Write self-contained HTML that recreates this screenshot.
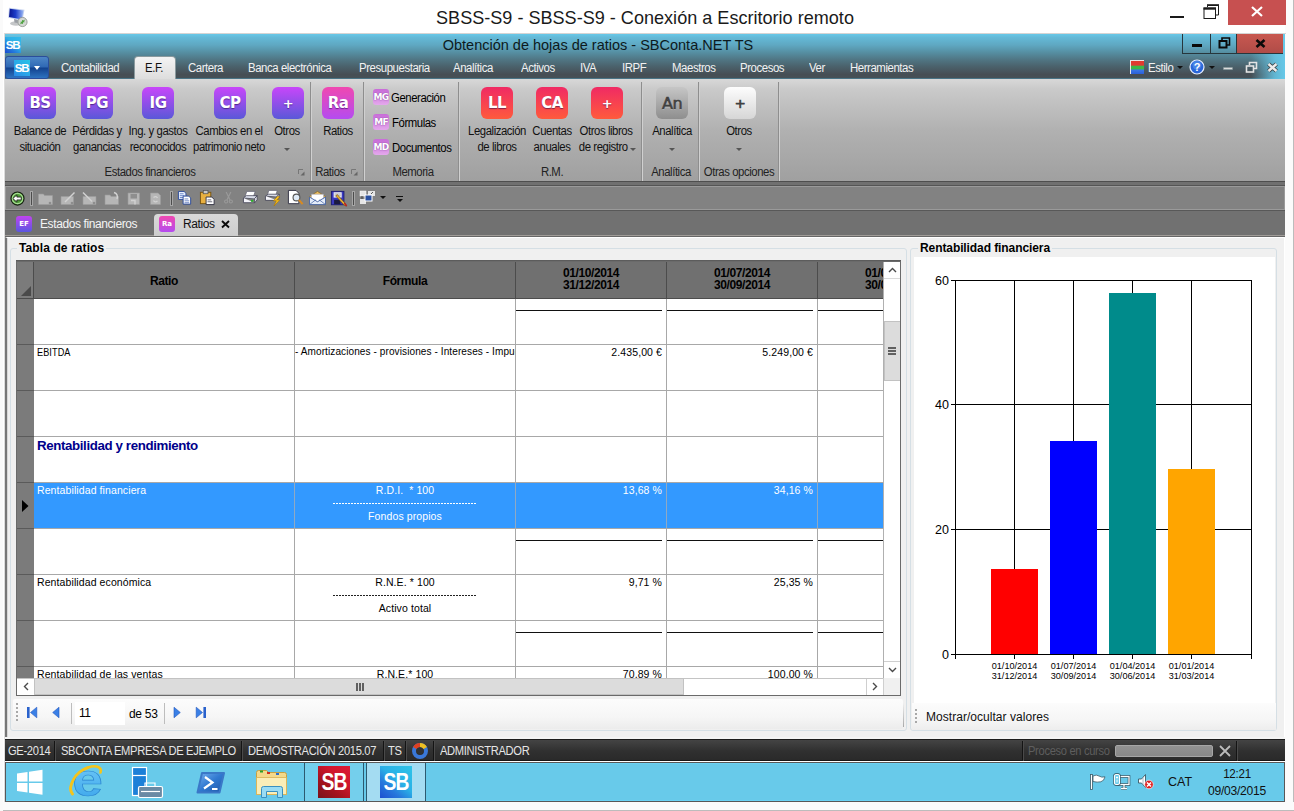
<!DOCTYPE html>
<html lang="es">
<head>
<meta charset="utf-8">
<title>SBSS-S9 - Conexión a Escritorio remoto</title>
<style>
*{box-sizing:border-box;margin:0;padding:0}
html,body{width:1294px;height:811px;overflow:hidden;background:#fff}
body{font-family:"Liberation Sans","DejaVu Sans",sans-serif;font-size:11px;color:#000;position:relative}
.abs{position:absolute}
.t{position:absolute;white-space:nowrap;line-height:1}
.c{text-align:center}
/* outer window */
#outer{position:absolute;left:0;top:0;width:1294px;height:811px;background:#fff}
#frameR{position:absolute;left:1285px;top:0;width:9px;height:811px;background:#fbfbfb;border-right:1px solid #bcbcbc}
#frameB{position:absolute;left:0;top:802px;width:1294px;height:9px;background:#fbfbfb;border-bottom:1px solid #bcbcbc}
#frameL{position:absolute;left:0;top:0;width:3px;height:811px;background:#fafafa}
#otitle{left:0;width:1290px;top:9px;font-size:18.5px;color:#1a1a1a;text-align:center;transform:scaleX(.977)}
#oclose{position:absolute;left:1228px;top:0;width:58px;height:25px;background:#c75050}
/* inner */
#app{position:absolute;left:5px;top:34px;width:1280px;height:768px;background:#f0f0f0;overflow:hidden}
#hdr{position:absolute;left:0;top:0;width:1280px;height:45px;background:linear-gradient(#68c8e8 0px,#64b9d7 3.500px,#5fa8c2 11px,#5690a4 18px,#507684 25.500px,#4a606a 33px,#464e54 40.500px,#465056 43.500px,#4a7486 44.500px)}
#hdrR{position:absolute;right:0;top:0;width:34px;height:45px;background:linear-gradient(90deg,rgba(102,200,232,0),rgba(102,200,232,.85) 70%,#66c8e8)}
#atitle{left:0;width:1186px;top:4px;font-size:14.5px;color:#0d1a20;text-align:center}
.menu{top:27.5px;font-size:12px;color:#f2f2f2;letter-spacing:-.45px;transform:scaleX(.95);transform-origin:0 0}
#eftab{position:absolute;left:129px;top:22px;width:42px;height:24px;background:linear-gradient(#f4f4f4,#dcdcdc);border-radius:4px 4px 0 0;border:1px solid #8a9a9e;border-bottom:0}
/* ribbon */
#ribbon{position:absolute;left:0;top:45px;width:1280px;height:102px;background:linear-gradient(#d8d8d8 0,#cacaca 10px,#c1c1c1 24px,#b9b9b9 38px,#b1b1b1 51px,#acacac 65px,#a8a8a8 78px,#a3a3a3 92px,#a0a0a0 102px)}
.sep{position:absolute;top:3px;width:2px;height:99px;background:linear-gradient(90deg,#8e8e8e 50%,#d0d0d0 50%)}
.ico{position:absolute;top:8px;width:32px;height:32px;border-radius:6px;color:#fff;font-weight:bold;font-size:15px;text-align:center;line-height:33.500px;font-family:"DejaVu Sans","Liberation Sans",sans-serif;letter-spacing:-.5px;text-shadow:0 1px 1px rgba(30,10,70,.55)}
.pur{background:linear-gradient(#c846fa,#5a58d8)}
.pnk{background:linear-gradient(#f048b0,#b44cf0)}
.red{background:linear-gradient(#f02a64,#ff5a3c)}
.gry{background:linear-gradient(#c6c6c6,#8e8e8e);color:#404040;font-weight:normal;text-shadow:0 1px 0 rgba(255,255,255,.5);-webkit-text-stroke:.4px #404040}
.wht{background:linear-gradient(#fdfdfd,#d6d6d6);color:#404040;font-weight:normal;text-shadow:none;-webkit-text-stroke:.4px #404040}
.rl{position:absolute;font-size:12px;line-height:16px;text-align:center;white-space:nowrap;color:#111;letter-spacing:-.45px;transform:translateX(-50%) scaleX(.945)}
.gl{position:absolute;top:85.500px;font-size:12px;line-height:14px;color:#222;white-space:nowrap;letter-spacing:-.45px;transform:translateX(-50%) scaleX(.945)}
.sico{position:absolute;left:368px;width:16px;height:16px;border-radius:3px;background:linear-gradient(#c86cd8,#e4a8ec);color:#fff;font-size:9px;font-weight:bold;text-align:center;line-height:17.500px;letter-spacing:-.7px;text-shadow:0 0 1.500px #70348a;font-family:"DejaVu Sans",sans-serif}
.dd{position:absolute;width:0;height:0;border-left:3px solid transparent;border-right:3px solid transparent;border-top:3px solid #555}

/* toolbar */
#tbstrip{position:absolute;left:0;top:147px;width:1280px;height:5px;background:linear-gradient(#4e4e4e 0,#4e4e4e 1px,#707070 1px,#707070 3.500px,#555 3.500px,#555 5px)}
#toolbar{position:absolute;left:0;top:152px;width:1280px;height:24px;background:#828282;border:1px solid #9a9a9a}
#tabs{position:absolute;left:0;top:176px;width:1280px;height:27px;background:#717171;border-top:1px solid #585858;border-bottom:1px solid #676767;box-shadow:inset 0 -1px 0 #a09c98}
#tabsel{position:absolute;left:149px;top:3px;width:84px;height:22px;background:linear-gradient(#d9d9d9,#cdcdcd);border-radius:4px 4px 0 0}
.tsep{position:absolute;top:4px;width:3px;height:15px;background:linear-gradient(90deg,#a6a6a6 0,#a6a6a6 1px,#4c4c4c 1px,#4c4c4c 2px,#a6a6a6 2px);border-top:1px solid #a6a6a6;border-bottom:1px solid #a6a6a6}

/* content */
#content{position:absolute;left:0;top:203px;width:1280px;height:500px;background:#f0f0f0;border-top:1px solid #fff;border-left:2px solid #777;border-right:1px solid #fff;box-shadow:inset 1px 0 0 #d8d8d8}
.gb{position:absolute;border:1px solid #d5dfe5;border-radius:3px}
.gbt{position:absolute;font-weight:bold;font-size:12px;background:#f0f0f0;padding:0 2px;line-height:14px;letter-spacing:.1px;white-space:nowrap}
#grid{position:absolute;left:11px;top:227px;width:885px;height:435px;background:#fff;overflow:hidden;border:1px solid #6a6a6a}
#ghead{position:absolute;left:0;top:0;width:868px;height:37px;background:#707070}
#grow{position:absolute;left:0;top:0;width:17px;height:418px;background:#7b7b7b}
.hl{position:absolute;left:0;width:868px;height:1px;background:#a8a8a8}
.vl{position:absolute;top:37px;width:1px;height:381px;background:#a8a8a8}
.hvl{position:absolute;top:0;width:1px;height:37px;background:#4c4c4c}
.rhl{position:absolute;left:0;width:17px;height:1px;background:#5a5a5a}
.gh{position:absolute;font-weight:bold;font-size:12px;line-height:12px;text-align:center;color:#000;letter-spacing:-.4px;white-space:nowrap}
.gc{position:absolute;font-size:10.500px;line-height:12px;white-space:nowrap;color:#000;letter-spacing:.1px}
.ul{position:absolute;height:1px;background:#111}
#sel{position:absolute;left:17px;top:221px;width:851px;height:46px;background:#3399ff}
.sb{position:absolute;background:#f0f0f0}
.thumb{position:absolute;background:#dcdcdc;border:1px solid #c2c2c2}
.chev{position:absolute;fill:none;stroke:#4a4a4a;stroke-width:1.400}

/* status + taskbar */
#status{position:absolute;left:0;top:705px;width:1280px;height:22px;background:linear-gradient(#444,#303030 55%,#2a2a2a);border-top:1px solid #1c1c1c;border-bottom:1px solid #161616}
.st{position:absolute;top:5px;font-size:12px;line-height:12px;color:#e6e6e6;white-space:nowrap;letter-spacing:-.35px;transform:scaleX(.93);transform-origin:0 0}
.ss{position:absolute;top:1px;width:2px;height:20px;background:linear-gradient(90deg,#141414 50%,#4a4a4a 50%)}
#task{position:absolute;left:0;top:728px;width:1280px;height:40px;background:#68caea;border:1px solid #585858;box-shadow:inset 0 1px 0 #6ad2f4,inset 0 -1px 0 #6ad2f4}
</style>
</head>
<body>
<div id="outer">
  <div id="frameR"></div><div id="frameB"></div><div id="frameL"></div>
  <div class="t" id="otitle">SBSS-S9 - SBSS-S9 - Conexión a Escritorio remoto</div>
  <!-- rdp icon -->
  <svg class="abs" style="left:7px;top:7px" width="22" height="21" viewBox="0 0 22 21">
    <defs><linearGradient id="mon" x1="0" y1="0" x2="1" y2="0"><stop offset="0" stop-color="#0a1690"/><stop offset=".45" stop-color="#1c3cc8"/><stop offset="1" stop-color="#9ab8f4"/></linearGradient></defs>
    <ellipse cx="9" cy="16.500" rx="6" ry="2.200" fill="#c4c6c8"/>
    <polygon points="7,12 11,12.500 10.500,16 7.500,15.500" fill="#9a9ea4"/>
    <polygon points="2,.8 17.500,2.800 15.500,13.800 1.200,10.800" fill="#c8d4f0"/>
    <polygon points="2.800,1.800 16.500,3.600 14.800,12.600 2,10" fill="url(#mon)"/>
    <circle cx="15.500" cy="15" r="4.600" fill="#d4d8d4" stroke="#8a8f8a" stroke-width=".8"/>
    <path d="M13.300 17.200l2-2m0 0v1.700m0-1.700h-1.700M17.700 12.800l-2 2m0 0v-1.700m0 1.700h1.700" stroke="#3a9a2a" stroke-width="1" fill="none"/>
  </svg>
  <div class="abs" style="left:1170px;top:16px;width:14px;height:2px;background:#1a1a1a"></div>
  <svg class="abs" style="left:1202px;top:3px" width="18" height="17" viewBox="0 0 18 17"><path d="M5.500 4v-1.500h11v9.500h-3" fill="none" stroke="#1a1a1a" stroke-width="1"/><rect x="5" y="1.200" width="12" height="1.600" fill="#1a1a1a"/><rect x="2" y="5" width="11.500" height="10.500" fill="#fff" stroke="#1a1a1a" stroke-width="1"/><rect x="1.500" y="4.500" width="12.500" height="2.200" fill="#1a1a1a"/></svg>
  <div id="oclose"><svg width="58" height="25" viewBox="0 0 58 25"><path d="M24 7l10 9M34 7l-10 9" stroke="#fff" stroke-width="2.2"/></svg></div>
</div>

<div class="abs" style="left:4px;top:33px;width:1282px;height:1px;background:#d4d4d4"></div><div class="abs" style="left:4px;top:33px;width:1px;height:769px;background:#dcdcdc"></div>
<div id="app">
  <div id="hdr"></div><div id="hdrR"></div>
  <div class="t" id="atitle">Obtención de hojas de ratios - SBConta.NET TS</div>
  <!-- app icon -->
  <div class="abs" style="left:0;top:3px;width:16px;height:16px;background:linear-gradient(40deg,#1a4ad0 0%,#2478dc 30%,#2eb0e6 58%,#34baea 100%);color:#fff;font-weight:bold;font-size:11.500px;line-height:16px;text-align:center;letter-spacing:-1.200px;text-indent:-1px">SB</div>
  <!-- app button -->
  <div class="abs" style="left:0;top:22px;width:44px;height:23px;border-radius:3px;border:1px solid #2a4e9c;background:linear-gradient(#4d86c6 0,#2f68b4 48%,#12418e 52%,#2d73c0 100%)">
    <div class="abs" style="left:8px;top:3px;width:16px;height:16px;background:linear-gradient(40deg,#2a88e6 0%,#2aa4e8 40%,#24c4e6 100%);color:#fff;font-weight:bold;font-size:11.500px;line-height:16px;text-align:center;letter-spacing:-1.200px;text-indent:-1px">SB</div>
    <div class="abs" style="left:28px;top:9px;width:0;height:0;border-left:3.500px solid transparent;border-right:3.500px solid transparent;border-top:4px solid #fff"></div>
  </div>

  <!-- app window controls -->
  <div class="abs" style="left:1177px;top:0;width:101px;height:20px;border:1px solid #27363c;border-top:0">
    <div class="abs" style="left:27px;top:0;width:1px;height:19px;background:#27363c"></div>
    <div class="abs" style="left:53px;top:0;width:47px;height:19px;background:linear-gradient(#c85850,#b04c48);border-left:1px solid #27363c"></div>
    <div class="abs" style="left:9px;top:10px;width:10px;height:3px;background:#0a0a0a"></div>
    <svg class="abs" style="left:35px;top:3px" width="13" height="12" viewBox="0 0 13 12"><path d="M4 3.500v-2.500h7.500v7h-2.500" fill="none" stroke="#0a0a0a" stroke-width="1.600"/><rect x="1.500" y="4" width="7" height="6.500" fill="none" stroke="#0a0a0a" stroke-width="2"/></svg>
    <svg class="abs" style="left:72px;top:5px" width="11" height="9" viewBox="0 0 11 9"><path d="M1.500 1l8 7M9.500 1l-8 7" stroke="#0a0a0a" stroke-width="2.600"/></svg>
  </div>
  <!-- menu right -->
  <div class="abs" style="left:1125px;top:26px;width:14px;height:14px;border-left:1px solid #e8e8e8;border-top:1px solid #e8e8e8;background:linear-gradient(#e03a30 0,#e03a30 33%,#3cb848 38%,#3cb848 62%,#3a78e8 68%,#2a60d8)"></div>
  <div class="t menu" style="left:1143px">Estilo</div>
  <div class="abs" style="left:1172px;top:32px;width:0;height:0;border-left:3px solid transparent;border-right:3px solid transparent;border-top:3px solid #111"></div>
  <svg class="abs" style="left:1184px;top:25px" width="16" height="16" viewBox="0 0 16 16"><circle cx="8" cy="8" r="7" fill="#2a66d8" stroke="#e8f0ff" stroke-width="1.200"/><circle cx="8" cy="6" r="4.500" fill="#5a96f0" opacity=".6"/><text x="8" y="12" text-anchor="middle" font-family="Liberation Sans, sans-serif" font-weight="bold" font-size="11" fill="#fff">?</text></svg>
  <div class="abs" style="left:1204px;top:32px;width:0;height:0;border-left:3px solid transparent;border-right:3px solid transparent;border-top:3px solid #111"></div>
  <div class="abs" style="left:1218px;top:33px;width:10px;height:3px;background:#dcdcdc;border:1px solid #8a9a9e;border-radius:1px"></div>
  <svg class="abs" style="left:1240px;top:27px" width="13" height="13" viewBox="0 0 13 13"><path d="M4.500 4v-2.500h7v6h-2.500" fill="none" stroke="#e4e4e4" stroke-width="1.600"/><rect x="1.500" y="5" width="7" height="6" fill="none" stroke="#e4e4e4" stroke-width="1.600"/></svg>
  <svg class="abs" style="left:1261px;top:28px" width="13" height="11" viewBox="0 0 13 11"><path d="M2.500 2l8 7M10.500 2l-8 7" stroke="#3a4448" stroke-width="4.200"/><path d="M2.500 2l8 7M10.500 2l-8 7" stroke="#ececec" stroke-width="2.500"/></svg>
  <div id="eftab"></div>
  <div class="t menu" style="left:56px">Contabilidad</div>
  <div class="t menu" style="left:140px;color:#111">E.F.</div>
  <div class="t menu" style="left:183px">Cartera</div>
  <div class="t menu" style="left:243px">Banca electrónica</div>
  <div class="t menu" style="left:354px">Presupuestaria</div>
  <div class="t menu" style="left:448px">Analítica</div>
  <div class="t menu" style="left:516px">Activos</div>
  <div class="t menu" style="left:575px">IVA</div>
  <div class="t menu" style="left:617px">IRPF</div>
  <div class="t menu" style="left:667px">Maestros</div>
  <div class="t menu" style="left:735px">Procesos</div>
  <div class="t menu" style="left:804px">Ver</div>
  <div class="t menu" style="left:845px">Herramientas</div>

  <div id="ribbon">
    <div class="ico pur" style="left:19px">BS</div>
    <div class="ico pur" style="left:76px">PG</div>
    <div class="ico pur" style="left:137px">IG</div>
    <div class="ico pur" style="left:209px">CP</div>
    <div class="ico pur" style="left:267px;font-size:13px">+</div>
    <div class="ico pnk" style="left:317px">Ra</div>
    <div class="ico red" style="left:476px">LL</div>
    <div class="ico red" style="left:531px">CA</div>
    <div class="ico red" style="left:586px;font-size:13px">+</div>
    <div class="ico gry" style="left:651px;font-size:16px;-webkit-text-stroke:.6px #404040">An</div>
    <div class="ico wht" style="left:719px;font-size:13px;-webkit-text-stroke:.7px #404040">+</div>

    <div class="rl" style="left:35px;top:44px">Balance de<br>situación</div>
    <div class="rl" style="left:92px;top:44px">Pérdidas y<br>ganancias</div>
    <div class="rl" style="left:153px;top:44px">Ing. y gastos<br>reconocidos</div>
    <div class="rl" style="left:224px;top:44px">Cambios en el<br>patrimonio neto</div>
    <div class="rl" style="left:282px;top:44px">Otros</div>
    <div class="rl" style="left:333px;top:44px">Ratios</div>
    <div class="rl" style="left:492px;top:44px">Legalización<br>de libros</div>
    <div class="rl" style="left:547px;top:44px">Cuentas<br>anuales</div>
    <div class="rl" style="left:601px;top:44px">Otros libros<br>de registro&nbsp;&nbsp;</div>
    <div class="rl" style="left:667px;top:44px">Analítica</div>
    <div class="rl" style="left:734px;top:44px">Otros</div>
    <div class="dd" style="left:279px;top:69px"></div>
    <div class="dd" style="left:625px;top:69px"></div>
    <div class="dd" style="left:664px;top:69px"></div>
    <div class="dd" style="left:731px;top:69px"></div>

    <div class="sico" style="top:10px">MG</div>
    <div class="sico" style="top:35px">MF</div>
    <div class="sico" style="top:60px">MD</div>
    <div class="t" style="left:386px;top:13px;font-size:12px;letter-spacing:-.45px;transform:scaleX(.945);transform-origin:0 0">Generación</div>
    <div class="t" style="left:387px;top:38px;font-size:12px;letter-spacing:-.45px;transform:scaleX(.945);transform-origin:0 0">Fórmulas</div>
    <div class="t" style="left:387px;top:63px;font-size:12px;letter-spacing:-.45px;transform:scaleX(.945);transform-origin:0 0">Documentos</div>

    <div class="gl" style="left:145px">Estados financieros</div>
    <div class="gl" style="left:325px">Ratios</div>
    <div class="gl" style="left:408px">Memoria</div>
    <div class="gl" style="left:547px">R.M.</div>
    <div class="gl" style="left:666px">Analítica</div>
    <div class="gl" style="left:734px">Otras opciones</div>

    <svg class="abs" style="left:293px;top:90px" width="7" height="7" viewBox="0 0 7 7"><path d="M.5 5v-4.500h4.500" fill="none" stroke="#777" stroke-width="1"/><path d="M6.500 2.500v4h-4z" fill="#666"/></svg>
    <svg class="abs" style="left:346px;top:90px" width="7" height="7" viewBox="0 0 7 7"><path d="M.5 5v-4.500h4.500" fill="none" stroke="#777" stroke-width="1"/><path d="M6.500 2.500v4h-4z" fill="#666"/></svg>
    <div class="sep" style="left:305px"></div>
    <div class="sep" style="left:358px"></div>
    <div class="sep" style="left:453px"></div>
    <div class="sep" style="left:636px"></div>
    <div class="sep" style="left:693px"></div>
    <div class="sep" style="left:773px"></div>
  </div>

  <div id="tbstrip"></div>
  <div id="toolbar">
    <!-- back -->
    <svg class="abs" style="left:4px;top:4px" width="15" height="15" viewBox="0 0 16 16"><circle cx="8" cy="8" r="7" fill="#4f9a38" stroke="#161e12" stroke-width="1.200"/><circle cx="8" cy="8" r="5.500" fill="none" stroke="#a8dc94" stroke-width="1.200"/><path d="M3 8l4.300-3.800v2.300h4.700v3h-4.700v2.300z" fill="#fff" stroke="#111" stroke-width=".8"/></svg>
    <div class="tsep" style="left:24px"></div>
    <!-- disabled icons -->
    <svg class="abs" style="left:31px;top:3px" width="130" height="17" viewBox="0 0 130 17">
      <g fill="#b6b6b6" stroke="#9c9c9c" stroke-width=".6">
        <path d="M1.500 4h5l1 1.500h8v9h-14z"/><path d="M24 6.500h12.500v8h-12.500z"/><path d="M46 6.500h13v8h-13z"/><path d="M68 5h5l1 1.500h7.500v8h-13.500z"/><path d="M91 3h11.500v11.500h-11.500z"/><path d="M113.500 3h7.500l2.500 2.500v9h-10z"/>
      </g>
      <g stroke="#d2d2d2" stroke-width="1.400" fill="none"><path d="M28 12l9.500-9.500"/><path d="M46 2.500l9 9"/><path d="M77 2.500q4.500 1.500 3 6.500"/><path d="M94 10.500h4v4"/><path d="M116.500 7.500q2.500-2 4 .5m0 3q-2.500 2-4-.5"/></g>
      <g fill="#8e8e8e"><circle cx="13" cy="13" r="1.300"/><circle cx="35" cy="13" r="1.300"/><circle cx="57" cy="13" r="1.300"/><rect x="93.500" y="4" width="6.500" height="4.500"/></g>
    </svg>
    <div class="tsep" style="left:164px"></div>
    <!-- copy -->
    <svg class="abs" style="left:171px;top:3px" width="16" height="16" viewBox="0 0 17 17"><path d="M1.500 1.500h6l2 2v6.500h-8z" fill="#e8f0ff" stroke="#2a4a9a" stroke-width="1"/><path d="M3 4h4M3 6h5M3 8h5" stroke="#4a6ab8" stroke-width=".8"/><path d="M6.500 6.500h6l2 2v6.500h-8z" fill="#fff" stroke="#2a4a9a" stroke-width="1"/><path d="M8 9.500h4M8 11.500h5M8 13.500h5" stroke="#4a6ab8" stroke-width=".8"/></svg>
    <!-- paste -->
    <svg class="abs" style="left:193px;top:2px" width="17" height="17" viewBox="0 0 18 18"><rect x="1.500" y="3.500" width="11" height="12" fill="#e8b040" stroke="#7a5510"/><rect x="4.500" y="1.500" width="5" height="3.500" fill="#c8c8c8" stroke="#555" stroke-width=".8"/><path d="M7.500 8.500h6l2.500 2.500v5.500h-8.500z" fill="#fff" stroke="#334" stroke-width="1"/><path d="M9 11.500h4M9 13.500h5" stroke="#556" stroke-width=".9"/></svg>
    <!-- cut (disabled) -->
    <svg class="abs" style="left:217px;top:4px" width="11" height="14" viewBox="0 0 14 17"><path d="M4 1l5 10M10 1l-5 10" stroke="#9a9a9a" stroke-width="1.500" fill="none"/><circle cx="4" cy="13" r="2" fill="none" stroke="#9a9a9a" stroke-width="1.300"/><circle cx="10" cy="13" r="2" fill="none" stroke="#9a9a9a" stroke-width="1.300"/></svg>
    <!-- print -->
    <svg class="abs" style="left:236px;top:3px" width="17" height="16" viewBox="0 0 18 17"><path d="M5 1.500h9l-2 6h-9z" fill="#fff" stroke="#667" stroke-width=".8"/><path d="M1.500 8.500l3-2.500h11.500l-2.500 3.500z" fill="#d8dce8" stroke="#445" stroke-width=".8"/><path d="M1.500 8.500v5h12v-4.500l2.500-3v4.500l-2.500 3" fill="#f4f4fa" stroke="#445" stroke-width=".9"/><rect x="9.500" y="10.500" width="2.500" height="2" fill="#2ab02a"/></svg>
    <!-- quick print -->
    <svg class="abs" style="left:258px;top:2px" width="19" height="18" viewBox="0 0 20 19"><path d="M5 1.500h9l-1.500 5h-9z" fill="#fff" stroke="#667" stroke-width=".8"/><path d="M1.500 7.500l3-2h11.500l-2.500 3z" fill="#d8dce8" stroke="#445" stroke-width=".8"/><path d="M1.500 7.500v4.500h12v-4l2.500-2.500v4l-2.500 2.500" fill="#f4f4fa" stroke="#445" stroke-width=".9"/><path d="M14 8l-4 4.500h3l-2.500 5.500 6-6.500h-3l3-3.500z" fill="#ffc820" stroke="#b07800" stroke-width=".7"/></svg>
    <!-- preview -->
    <svg class="abs" style="left:281px;top:2px" width="18" height="18" viewBox="0 0 19 19"><path d="M1.500 1.500h8l3 3v11h-11z" fill="#fff" stroke="#334" stroke-width="1"/><circle cx="10" cy="9" r="3.600" fill="#dfeaf6" stroke="#555" stroke-width="1.200"/><path d="M12.500 11.500l4 4.500" stroke="#d88a20" stroke-width="2.200"/></svg>
    <!-- mail -->
    <svg class="abs" style="left:302px;top:3px" width="19" height="16" viewBox="0 0 20 17"><path d="M1.500 7l8.500-5.500 8.500 5.500v8.500h-17z" fill="#f0c060" stroke="#8a6a20" stroke-width=".8"/><path d="M3.500 4.500h13v8h-13z" fill="#fff" stroke="#99a" stroke-width=".6"/><path d="M1.500 7.500l8.500 5 8.500-5v8h-17z" fill="#e4ecf8" stroke="#4a68a8" stroke-width="1"/><path d="M1.500 15.500l6.500-5M18.500 15.500l-6.500-5" stroke="#4a68a8" stroke-width=".8"/></svg>
    <!-- save/edit -->
    <svg class="abs" style="left:324px;top:3px" width="18" height="17" viewBox="0 0 20 19"><rect x="1.500" y="1.500" width="14" height="15" fill="#3a3ac0" stroke="#1a1a70"/><rect x="4" y="2.500" width="9" height="6" fill="#f4f4f4"/><path d="M5 4.500h7M5 6.500h7" stroke="#889" stroke-width=".8"/><rect x="4.500" y="11" width="7" height="5" fill="#1a1a40"/><path d="M8 5l9 10 1.500 3-3-1.200-9-10z" fill="#e8b030" stroke="#6a4a10" stroke-width=".7"/><path d="M16 14.500l2.500 3.500" stroke="#c02020" stroke-width="1.800"/></svg>
    <div class="tsep" style="left:346px"></div>
    <!-- window -->
    <svg class="abs" style="left:353px;top:3px" width="18" height="17" viewBox="0 0 18 17"><rect x="1" y="1" width="6" height="5" fill="#e6e6e6" stroke="#fff" stroke-width=".5"/><rect x="9" y="1" width="7" height="5" fill="#e6e6e6"/><rect x="1" y="9" width="6" height="5" fill="#e6e6e6"/><rect x="6" y="5" width="7" height="6" fill="#2a50a0" stroke="#fff" stroke-width="1"/><path d="M3 6v3M12 4l2-2" stroke="#333" stroke-width=".8"/></svg>
    <div class="abs" style="left:374px;top:9px;width:0;height:0;border-left:3px solid transparent;border-right:3px solid transparent;border-top:3px solid #111"></div>
    <div class="abs" style="left:390px;top:9px;width:7px;height:1px;background:#111"></div>
    <div class="abs" style="left:391px;top:12px;width:0;height:0;border-left:3px solid transparent;border-right:3px solid transparent;border-top:3px solid #111"></div>
  </div>
  <div id="tabs">
    <div id="tabsel"></div>
    <div class="abs" style="left:11px;top:5px;width:16px;height:16px;border-radius:3px;background:linear-gradient(#c044f0,#5a56e0);color:#fff;font:bold 7px/16px 'DejaVu Sans',sans-serif;text-align:center">EF</div>
    <div class="t" style="left:35px;top:7px;font-size:12px;color:#f4f4f4;letter-spacing:-.4px">Estados financieros</div>
    <div class="abs" style="left:154px;top:5px;width:16px;height:16px;border-radius:3px;background:linear-gradient(#f048b0,#b44cf0);color:#fff;font:bold 7px/16px 'DejaVu Sans',sans-serif;text-align:center">Ra</div>
    <div class="t" style="left:178px;top:7px;font-size:12px;color:#111;letter-spacing:-.4px">Ratios</div>
    <svg class="abs" style="left:216px;top:9px" width="9" height="9" viewBox="0 0 9 9"><path d="M1 1l7 6.500M8 1l-7 6.500" stroke="#0a0a0a" stroke-width="1.900"/></svg>
  </div>


  <div id="content"></div>
  <!-- left group box -->
  <div class="gb" style="left:5px;top:214px;width:897px;height:483px"></div>
  <div class="gbt" style="left:12px;top:207px">Tabla de ratios</div>
  <div class="abs" style="left:11px;top:226px;width:885px;height:1px;background:#5c5c5c"></div>
  <div id="grid">
    <div id="ghead"></div><div id="grow"></div>
    <div id="sel"></div>
    <!-- header separators -->
    <div class="hvl" style="left:16px"></div><div class="hvl" style="left:277px"></div><div class="hvl" style="left:498px"></div><div class="hvl" style="left:649px"></div><div class="hvl" style="left:800px"></div>
    <div class="abs" style="left:0;top:36px;width:868px;height:1px;background:#4c4c4c"></div>
    <svg class="abs" style="left:4px;top:24px" width="11" height="11" viewBox="0 0 11 11"><path d="M10 0v10h-10z" fill="#4a4a4a"/></svg>
    <div class="gh" style="left:17px;width:260px;top:13px">Ratio</div>
    <div class="gh" style="left:278px;width:220px;top:13px">Fórmula</div>
    <div class="gh" style="left:499px;width:150px;top:5px">01/10/2014<br>31/12/2014</div>
    <div class="gh" style="left:650px;width:150px;top:5px">01/07/2014<br>30/09/2014</div>
    <div class="gh" style="left:848px;width:40px;top:5px;text-align:left">01/0<br>30/0</div>
    <!-- vertical lines -->
    <div class="vl" style="left:277px"></div><div class="vl" style="left:498px"></div><div class="vl" style="left:649px"></div><div class="vl" style="left:800px"></div>
    <!-- horizontal lines -->
    <div class="hl" style="top:82px"></div><div class="hl" style="top:128px"></div><div class="hl" style="top:174px"></div><div class="hl" style="top:220px"></div><div class="hl" style="top:266px"></div><div class="hl" style="top:312px"></div><div class="hl" style="top:358px"></div><div class="hl" style="top:404px"></div>
    <div class="rhl" style="top:82px"></div><div class="rhl" style="top:128px"></div><div class="rhl" style="top:174px"></div><div class="rhl" style="top:220px"></div><div class="rhl" style="top:266px"></div><div class="rhl" style="top:312px"></div><div class="rhl" style="top:358px"></div><div class="rhl" style="top:404px"></div>
    <!-- selection v-lines -->
    <div class="abs" style="left:277px;top:221px;width:1px;height:45px;background:#8fa9c4"></div><div class="abs" style="left:498px;top:221px;width:1px;height:45px;background:#8fa9c4"></div><div class="abs" style="left:649px;top:221px;width:1px;height:45px;background:#8fa9c4"></div><div class="abs" style="left:800px;top:221px;width:1px;height:45px;background:#8fa9c4"></div>
    <!-- underlines -->
    <div class="ul" style="left:499px;width:146px;top:48px"></div><div class="ul" style="left:650px;width:146px;top:48px"></div><div class="ul" style="left:801px;width:67px;top:48px"></div>
    <div class="ul" style="left:499px;width:146px;top:278px"></div><div class="ul" style="left:650px;width:146px;top:278px"></div><div class="ul" style="left:801px;width:67px;top:278px"></div>
    <div class="ul" style="left:499px;width:146px;top:370px"></div><div class="ul" style="left:650px;width:146px;top:370px"></div><div class="ul" style="left:801px;width:67px;top:370px"></div>
    <!-- cells -->
    <div class="gc" style="left:20px;top:84px;transform:scaleX(.87);transform-origin:0 0">EBITDA</div>
    <div class="abs" style="left:278px;top:83px;width:220px;height:14px;overflow:hidden"><div class="gc" style="left:0;top:0;transform:scaleX(.955);transform-origin:0 0">- Amortizaciones - provisiones - Intereses - Impuestos</div></div>
    <div class="gc" style="right:238px;top:84px">2.435,00 €</div>
    <div class="gc" style="right:87px;top:84px">5.249,00 €</div>
    <div class="gc" style="left:20px;top:176px;font-size:13.300px;font-weight:bold;color:#00008b;line-height:16px;letter-spacing:-.38px">Rentabilidad y rendimiento</div>
    <div class="gc" style="left:20px;top:222px;color:#fff">Rentabilidad financiera</div>
    <div class="gc c" style="left:278px;width:220px;top:222px;color:#fff">R.D.I.&nbsp; * 100</div>
    <div class="abs" style="left:316px;top:241px;width:144px;height:0;height:1px;background:repeating-linear-gradient(90deg,#fff 0 2px,transparent 2px 3px)"></div>
    <div class="gc c" style="left:278px;width:220px;top:248px;color:#fff">Fondos propios</div>
    <div class="gc" style="right:238px;top:222px;color:#fff">13,68 %</div>
    <div class="gc" style="right:87px;top:222px;color:#fff">34,16 %</div>
    <div class="gc" style="left:20px;top:314px">Rentabilidad económica</div>
    <div class="gc c" style="left:278px;width:220px;top:314px">R.N.E. * 100</div>
    <div class="abs" style="left:316px;top:333px;width:144px;height:0;height:1px;background:repeating-linear-gradient(90deg,#222 0 2px,transparent 2px 3px)"></div>
    <div class="gc c" style="left:278px;width:220px;top:340px">Activo total</div>
    <div class="gc" style="right:238px;top:314px">9,71 %</div>
    <div class="gc" style="right:87px;top:314px">25,35 %</div>
    <div class="gc" style="left:20px;top:406px">Rentabilidad de las ventas</div>
    <div class="gc c" style="left:278px;width:220px;top:406px">R.N.E.* 100</div>
    <div class="gc" style="right:238px;top:406px">70,89 %</div>
    <div class="gc" style="right:87px;top:406px">100,00 %</div>
    <!-- current row arrow -->
    <svg class="abs" style="left:5px;top:238px" width="7" height="12" viewBox="0 0 7 12"><path d="M0 0l6.500 6-6.500 6z" fill="#000"/></svg>
    <!-- v scrollbar -->
    <div class="abs" style="left:866px;top:0;width:19px;height:416px;background:#fff;border-left:1px solid #b0b0b0"></div>
    <div class="abs" style="left:867px;top:16px;width:17px;height:1px;background:#dadada"></div>
    <div class="abs" style="left:867px;top:399px;width:17px;height:1px;background:#cfcfcf"></div>
    <div class="thumb" style="left:867px;top:59px;width:17px;height:60px"></div>
    <svg class="chev" style="left:871px;top:5px" width="9" height="6" viewBox="0 0 9 6"><path d="M1 5l3.500-3.500 3.500 3.500"/></svg>
    <svg class="chev" style="left:871px;top:405px" width="9" height="6" viewBox="0 0 9 6"><path d="M1 1l3.500 3.500 3.500-3.500"/></svg>
    <div class="abs" style="left:871px;top:85px;width:8px;height:2px;background:#606060;box-shadow:0 3px 0 #606060,0 6px 0 #606060"></div>
    <!-- h scrollbar -->
    <div class="abs" style="left:0;top:416px;width:885px;height:18px;background:#fff;border-top:1px solid #c4c4c4"></div>
    <div class="abs" style="left:866px;top:416px;width:19px;height:17px;background:#f0f0f0;border-left:1px solid #cfcfcf"></div>
    <div class="abs" style="left:849px;top:417px;width:1px;height:16px;background:#cfcfcf"></div>
    <div class="thumb" style="left:17px;top:416px;width:650px;height:17px"></div>
    <svg class="chev" style="left:6px;top:420px" width="6" height="9" viewBox="0 0 6 9"><path d="M5 1l-3.500 3.500 3.500 3.500"/></svg>
    <svg class="chev" style="left:855px;top:420px" width="6" height="9" viewBox="0 0 6 9"><path d="M1 1l3.500 3.500-3.500 3.500"/></svg>
    <div class="abs" style="left:339px;top:421px;width:2px;height:8px;background:#606060;box-shadow:3px 0 0 #606060,6px 0 0 #606060"></div>
  </div>
  <!-- navigator -->
  <div class="abs" style="left:898px;top:669px;width:1px;height:24px;background:linear-gradient(rgba(160,160,160,0),#a8a8a8)"></div>
  <div class="abs" style="left:8px;top:665px;width:890px;height:30px;border-radius:2px;background:linear-gradient(#fcfcfc,#f6f6f6 60%,#ececec)"></div>
  <div class="abs" style="left:11px;top:669px;width:2px;height:2px;background:#a8a8a8;box-shadow:0 4px 0 #a8a8a8,0 8px 0 #a8a8a8,0 12px 0 #a8a8a8,0 16px 0 #a8a8a8"></div>
  <svg class="abs" style="left:21px;top:672px" width="12" height="13" viewBox="0 0 12 13"><rect x="1" y="1" width="2.600" height="11" fill="#2a62cc"/><path d="M10.800 1.200v10.600l-6.300-5.300z" fill="#3a80e6" stroke="#2458c0" stroke-width=".6"/></svg>
  <svg class="abs" style="left:47px;top:672px" width="8" height="13" viewBox="0 0 8 13"><path d="M7 1.200v10.600l-6.300-5.300z" fill="#3a80e6" stroke="#2458c0" stroke-width=".6"/></svg>
  <div class="abs" style="left:66px;top:669px;width:1px;height:21px;background:#bdbdbd"></div>
  <div class="abs" style="left:70px;top:668px;width:50px;height:23px;background:#fff"></div>
  <div class="t" style="left:74px;top:673px;font-size:12px;letter-spacing:-.6px">11</div>
  <div class="t" style="left:124px;top:674px;font-size:12px;letter-spacing:-.3px">de 53</div>
  <div class="abs" style="left:159px;top:669px;width:1px;height:21px;background:#bdbdbd"></div>
  <svg class="abs" style="left:168px;top:672px" width="8" height="13" viewBox="0 0 8 13"><path d="M1 1.200v10.600l6.300-5.300z" fill="#3a80e6" stroke="#2458c0" stroke-width=".6"/></svg>
  <svg class="abs" style="left:190px;top:672px" width="12" height="13" viewBox="0 0 12 13"><path d="M1.200 1.200v10.600l6.300-5.300z" fill="#3a80e6" stroke="#2458c0" stroke-width=".6"/><rect x="8.400" y="1" width="2.600" height="11" fill="#2a62cc"/></svg>
<!-- right group box -->
  <div class="gb" style="left:905px;top:214px;width:367px;height:483px"></div>
  <div class="gbt" style="left:913px;top:207px;letter-spacing:-.09px">Rentabilidad financiera</div>
  <svg class="abs" style="left:909px;top:223px" width="361" height="446" viewBox="0 0 361 446" font-family="Liberation Sans, sans-serif">
    <rect x="0" y="0" width="361" height="446" fill="#fff"/>
    <g fill="#000"><rect x="41" y="23" width="1" height="379"/><rect x="100" y="23" width="1" height="379"/><rect x="159" y="23" width="1" height="379"/><rect x="218" y="23" width="1" height="379"/><rect x="277" y="23" width="1" height="379"/><rect x="337" y="23" width="1" height="379"/><rect x="37" y="23" width="301" height="1"/><rect x="37" y="147" width="301" height="1"/><rect x="37" y="272" width="301" height="1"/><rect x="37" y="397" width="301" height="1"/></g>
    <rect x="77" y="312" width="47" height="85" fill="#ff0000"/><rect x="136" y="184" width="47" height="213" fill="#0000ff"/><rect x="195" y="36" width="47" height="361" fill="#008b8b"/><rect x="254" y="212" width="47" height="185" fill="#ffa500"/>
    <g font-size="12.500" fill="#000" text-anchor="end"><text x="35" y="27.5">60</text><text x="35" y="151.5">40</text><text x="35" y="276.5">20</text><text x="35" y="401.5">0</text></g>
    <g font-size="9.100" fill="#000" text-anchor="middle"><text x="100.5" y="411.5">01/10/2014</text><text x="100.5" y="421.5">31/12/2014</text><text x="159.5" y="411.5">01/07/2014</text><text x="159.5" y="421.5">30/09/2014</text><text x="218.5" y="411.5">01/04/2014</text><text x="218.5" y="421.5">30/06/2014</text><text x="277.5" y="411.5">01/01/2014</text><text x="277.5" y="421.5">31/03/2014</text></g>
  </svg>
  <div class="abs" style="left:907px;top:669px;width:364px;height:27px;background:linear-gradient(#fcfcfc,#f6f6f6 60%,#ededed)"></div>
  <div class="abs" style="left:910px;top:675px;width:2px;height:2px;background:#a8a8a8;box-shadow:0 4px 0 #a8a8a8,0 8px 0 #a8a8a8,0 12px 0 #a8a8a8"></div>
  <div class="t" style="left:921px;top:677px;font-size:12px;color:#111;letter-spacing:.04px" id="mostrar">Mostrar/ocultar valores</div>
  <div class="abs" style="left:0;top:703px;width:1280px;height:2px;background:#f4f4f4"></div>
  <div class="abs" style="left:0;top:727px;width:1280px;height:1px;background:#fff"></div>
  <div id="status">
    <div class="st" style="left:3px">GE-2014</div><div class="ss" style="left:49px"></div>
    <div class="st" style="left:56px">SBCONTA EMPRESA DE EJEMPLO</div><div class="ss" style="left:236px"></div>
    <div class="st" style="left:243px">DEMOSTRACIÓN 2015.07</div><div class="ss" style="left:378px"></div>
    <div class="st" style="left:383px">TS</div><div class="ss" style="left:400px"></div>
    <svg class="abs" style="left:406px;top:2px" width="18" height="18" viewBox="0 0 18 18"><circle cx="9" cy="9" r="6" fill="none" stroke="#3a78d8" stroke-width="4"/><path d="M9 3a6 6 0 0 1 5.200 3" fill="none" stroke="#f0c020" stroke-width="4"/><path d="M3.800 6a6 6 0 0 1 5.200-3" fill="none" stroke="#e04020" stroke-width="4"/><circle cx="9" cy="9" r="3" fill="#333"/></svg>
    <div class="ss" style="left:428px"></div>
    <div class="st" style="left:435px">ADMINISTRADOR</div>
    <div class="ss" style="left:1017px"></div>
    <div class="st" style="left:1023px;color:#5e5e5e">Proceso en curso</div>
    <div class="abs" style="left:1110px;top:5px;width:98px;height:12px;border-radius:2px;background:linear-gradient(#929292,#888);border:1px solid #a6a6a6"></div>
    <svg class="abs" style="left:1213px;top:4px" width="14" height="14" viewBox="0 0 14 14"><path d="M2 2l10 10M12 2l-10 10" stroke="#bcbcbc" stroke-width="1.800"/></svg>
    <div class="ss" style="left:1231px"></div>
  </div>
  <div id="task">
    <!-- start -->
    <svg class="abs" style="left:10px;top:6px" width="28" height="27" viewBox="0 0 28 27"><path d="M1 4.500l10.500-1.600v9.600h-10.500zM13 2.700l13.500-2v11.800h-13.500zM1 14h10.500v9.600l-10.500-1.600zM13 14h13.500v11.800l-13.500-2z" fill="#fff"/></svg>
    <!-- IE -->
    <svg class="abs" style="left:61px;top:0" width="42" height="38" viewBox="0 0 42 38"><defs><linearGradient id="ieg" x1="0" y1="0" x2="0" y2="1"><stop offset="0" stop-color="#7ad0fa"/><stop offset="1" stop-color="#36a2ea"/></linearGradient></defs><path d="M5.500 31C0 24 8 9 21 4.500c9-3 14 0 12.500 5" fill="none" stroke="#f4c41c" stroke-width="2.600" stroke-linecap="round"/><text transform="translate(5.500 33) scale(1.240 1.060)" x="0" y="0" font-family="Liberation Sans, sans-serif" font-size="44" font-weight="bold" fill="url(#ieg)" stroke="#2a84d0" stroke-width=".6">e</text><path d="M5.500 31C0 24 8 9 21 4.500" fill="none" stroke="#f4c41c" stroke-width="2.600" stroke-linecap="round"/></svg>
    <!-- server manager -->
    <svg class="abs" style="left:125px;top:3px" width="33" height="33" viewBox="0 0 33 33"><rect x="1.500" y="1.500" width="14" height="28" fill="#1c80d8" stroke="#fff" stroke-width="1.200"/><path d="M2 9.500h13" stroke="#fff" stroke-width="1.200"/><rect x="7.500" y="20.500" width="24" height="11" rx="1.500" fill="#6a8aa4" stroke="#fff" stroke-width="1.200"/><path d="M14 20v-3h10v3" fill="none" stroke="#fff" stroke-width="1.200"/><path d="M10 25.500h19" stroke="#fff" stroke-width="1.200"/></svg>
    <!-- powershell -->
    <svg class="abs" style="left:190px;top:8px" width="30" height="24" viewBox="0 0 30 24"><defs><linearGradient id="psg" x1="0" y1="0" x2="1" y2="1"><stop offset="0" stop-color="#74b0f0"/><stop offset=".5" stop-color="#3078d0"/><stop offset="1" stop-color="#2058a8"/></linearGradient></defs><path d="M6 2h22l-4.500 19.500h-22z" fill="url(#psg)" stroke="#3a78c8" stroke-width="2" stroke-linejoin="round"/><path d="M9 6l7.500 5.500-8.500 6M16 18h5.500" fill="none" stroke="#fff" stroke-width="2.200"/></svg>
    <!-- explorer -->
    <svg class="abs" style="left:249px;top:5px" width="34" height="31" viewBox="0 0 34 31"><path d="M1.500 4.500q0-2 2-2h8l2 2h16q2 0 2 2v20h-30z" fill="#f4d98a" stroke="#c8a040" stroke-width="1"/><path d="M1.500 9.500h30v17h-30z" fill="#fbeeb8" stroke="#d8b050" stroke-width=".8"/><rect x="5" y="2.500" width="3" height="2" fill="#2aa02a"/><rect x="12" y="4" width="3" height="2" fill="#d03020"/><rect x="21" y="5" width="3" height="2" fill="#2a70d0"/><path d="M6.500 29.500v-9q0-2 2-2h17q2 0 2 2v9h-5v-6h-11v6z" fill="#9adcf4" stroke="#3a90c0" stroke-width="1"/></svg>
    <!-- SB red button -->
    <div class="abs" style="left:298px;top:0;width:60px;height:38px;background:#74cfec;border-left:1px solid #2c5a70;border-right:1px solid #2c5a70"></div>
    <div class="abs" style="left:312px;top:3px;width:32px;height:32px;background:linear-gradient(40deg,#78121a 0%,#a4121e 35%,#d0162e 65%,#dc1a34);color:#fff;font-weight:bold;font-size:23px;line-height:33px;text-align:center"><span style="display:inline-block;transform:scaleX(.84);letter-spacing:-1px">SB</span></div>
    <!-- SB blue button -->
    <div class="abs" style="left:360px;top:0;width:60px;height:38px;background:#a4dcf2;border-left:1px solid #2c5a70;border-right:1px solid #2c5a70"></div>
    <div class="abs" style="left:374px;top:3px;width:32px;height:32px;background:linear-gradient(40deg,#1c50d0 0%,#2678dc 30%,#2ab0e6 55%,#2ec4e8 100%);color:#fff;font-weight:bold;font-size:23px;line-height:33px;text-align:center"><span style="display:inline-block;transform:scaleX(.84);letter-spacing:-1px">SB</span></div>
    <!-- tray -->
    <svg class="abs" style="left:1083px;top:10px" width="19" height="18" viewBox="0 0 19 18"><rect x="1.500" y="1.500" width="2" height="15" fill="#fff" stroke="#3a5a68" stroke-width=".8"/><path d="M4 3q3.500-1.800 6 0t6 .8q-.8 4.200-4.200 5t-7.800-.3z" fill="#fff" stroke="#3a5a68" stroke-width=".8"/></svg>
    <svg class="abs" style="left:1107px;top:10px" width="18" height="17" viewBox="0 0 18 17"><g fill="none" stroke="#2c4c5a" stroke-width="2.600"><rect x="6" y="3.500" width="10" height="8"/><path d="M8 15.500h6M11 12v3"/></g><g fill="none" stroke="#fff" stroke-width="1.300"><rect x="6" y="3.500" width="10" height="8"/><path d="M8 15.500h6M11 12v3"/></g><rect x="1.500" y="1.500" width="5" height="10" rx="1.500" fill="#68caea" stroke="#2c4c5a" stroke-width="2.400"/><rect x="1.500" y="1.500" width="5" height="10" rx="1.500" fill="#68caea" stroke="#fff" stroke-width="1.200"/><circle cx="4" cy="4.500" r="1.100" fill="#fff"/><path d="M4 6.500v3" stroke="#fff" stroke-width="1"/></svg>
    <svg class="abs" style="left:1131px;top:10px" width="20" height="18" viewBox="0 0 20 18"><path d="M1.500 6h3l4-4.500v13l-4-4.500h-3z" fill="#fff" stroke="#3a5a68" stroke-width=".9"/><path d="M6 4.500v7" stroke="#9ab" stroke-width=".8"/><circle cx="12" cy="11.500" r="4.300" fill="#e02020" stroke="#fff" stroke-width=".6"/><path d="M10 9.500l4 4M14 9.500l-4 4" stroke="#fff" stroke-width="1.500"/></svg>
    <div class="t" style="left:1162px;top:13px;font-size:12.500px;color:#111">CAT</div>
    <div class="t c" style="left:1191px;width:80px;top:5px;font-size:12.500px;color:#111;letter-spacing:-.3px;transform:scaleX(.93)">12:21</div>
    <div class="t c" style="left:1191px;width:80px;top:22px;font-size:12.500px;color:#111;letter-spacing:-.3px;transform:scaleX(.97)">09/03/2015</div>
  </div>

</div>
</body>
</html>
